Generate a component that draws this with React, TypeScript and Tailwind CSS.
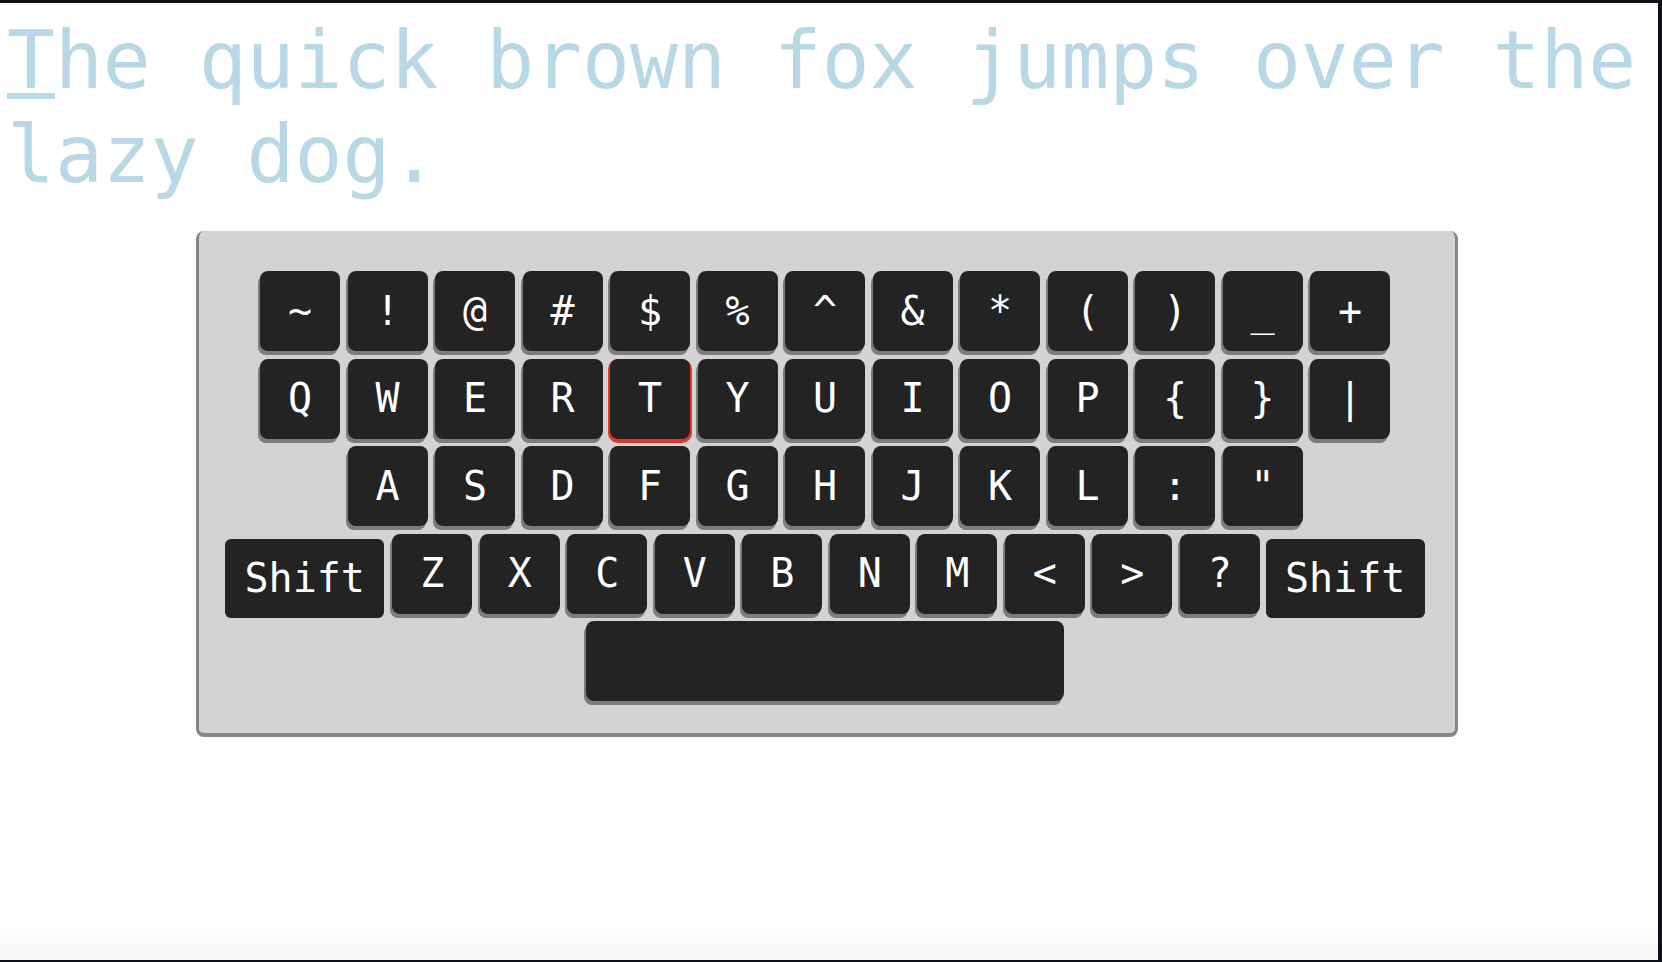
import React from 'react';

const rows: string[][] = [
  ['~', '!', '@', '#', '$', '%', '^', '&', '*', '(', ')', '_', '+'],
  ['Q', 'W', 'E', 'R', 'T', 'Y', 'U', 'I', 'O', 'P', '{', '}', '|'],
  ['A', 'S', 'D', 'F', 'G', 'H', 'J', 'K', 'L', ':', '"'],
];

const bottomRow = ['Z', 'X', 'C', 'V', 'B', 'N', 'M', '<', '>', '?'];

const Key = ({ label, active }: { label: string; active?: boolean }) => (
  <div
    className={
      active
        ? 'flex h-[80px] w-[80px] items-center justify-center rounded-lg bg-[#232323] text-[40px] leading-[1.165] text-white shadow-[0_2px_0_2px_#e5352a]'
        : 'flex h-[80px] w-[80px] items-center justify-center rounded-lg bg-[#232323] text-[40px] leading-[1.165] text-white shadow-[-2px_4px_0_#7c7c7c]'
    }
  >
    {label}
  </div>
);

const ShiftKey = () => (
  <div className="mt-[5px] flex h-[79px] w-[159px] items-center justify-center rounded-md bg-[#232323] text-[40px] leading-[1.165] text-white">
    Shift
  </div>
);

export default function App() {
  return (
    <div className="h-[962px] w-[1662px] bg-[#0d1117] pb-[2px] pr-[4px] pt-[3px] font-['DejaVu_Sans_Mono',monospace]">
      <div className="flex h-full flex-col bg-gradient-to-b from-white from-[96%] to-[#f6f6f6]">
        {/* Text to type */}
        <p className="pl-[7px] pt-[11px] text-[79.6px] leading-[93.5px] text-[#b7d8e4]">
          <span className="underline decoration-[6px] underline-offset-[5px]">T</span>
          he quick brown fox jumps over the lazy dog.
        </p>

        {/* Keyboard */}
        <div className="ml-[196px] mt-[30px] w-[1262px] rounded-lg border-x-[3px] border-b-4 border-t-0 border-[#868686] bg-[#d3d3d3] pb-[32px] pr-[4px] pt-[40px]">
          <div className="flex flex-col items-center gap-[7.5px]">
            {rows.map((row, i) => (
              <div key={i} className="flex gap-[7.5px]">
                {row.map((k) => (
                  <Key key={k} label={k} active={k === 'T'} />
                ))}
              </div>
            ))}
            <div className="flex h-[80px] items-start">
              <ShiftKey />
              <div className="ml-[8px] mr-[6px] flex gap-[7.5px]">
                {bottomRow.map((k) => (
                  <Key key={k} label={k} />
                ))}
              </div>
              <ShiftKey />
            </div>
            <div className="h-[80px] w-[478px] rounded-lg bg-[#232323] shadow-[-2px_4px_0_#7c7c7c]" />
          </div>
        </div>
      </div>
    </div>
  );
}
